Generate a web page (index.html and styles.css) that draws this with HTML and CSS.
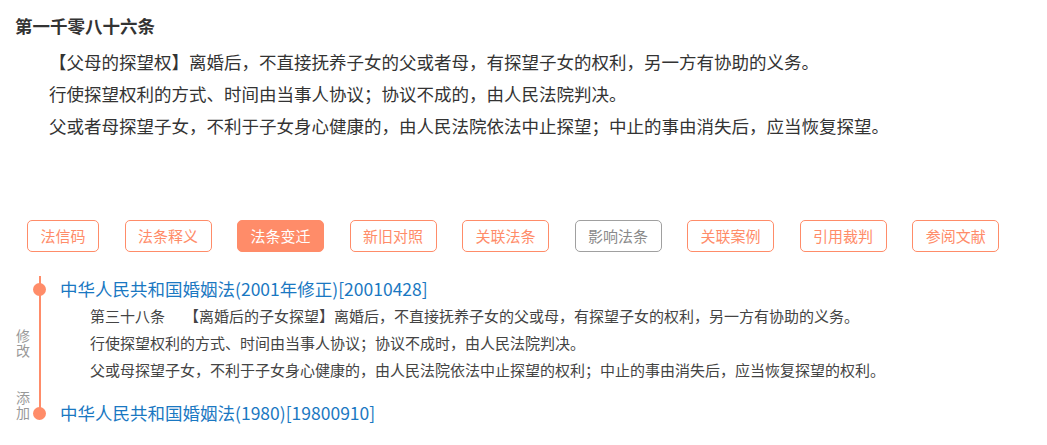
FILE: index.html
```html
<!doctype html>
<html>
  <head>
    <meta charset="UTF-8" />
    <meta name="viewport" content="width=device-width, initial-scale=1">
    <title>第一千零八十六条</title>
    <link rel="stylesheet" href="styles.css">
  </head>
  <body>
    <div class="page">
      <h1 class="article-title">第一千零八十六条</h1>
      <div class="article-body">
        <p>【父母的探望权】离婚后，不直接抚养子女的父或者母，有探望子女的权利，另一方有协助的义务。</p>
        <p>行使探望权利的方式、时间由当事人协议；协议不成的，由人民法院判决。</p>
        <p>父或者母探望子女，不利于子女身心健康的，由人民法院依法中止探望；中止的事由消失后，应当恢复探望。</p>
      </div>

      <div class="tabs">
        <a class="tab">法信码</a>
        <a class="tab">法条释义</a>
        <a class="tab active">法条变迁</a>
        <a class="tab">新旧对照</a>
        <a class="tab">关联法条</a>
        <a class="tab disabled">影响法条</a>
        <a class="tab">关联案例</a>
        <a class="tab">引用裁判</a>
        <a class="tab">参阅文献</a>
      </div>

      <div class="timeline">
        <a class="law-title">中华人民共和国婚姻法(2001年修正)[20010428]</a>

        <span class="change-label">修改</span>
        <div class="law-text">
          <p><span class="art-no">第三十八条</span>【离婚后的子女探望】离婚后，不直接抚养子女的父或母，有探望子女的权利，另一方有协助的义务。</p>
          <p>行使探望权利的方式、时间由当事人协议；协议不成时，由人民法院判决。</p>
          <p>父或母探望子女，不利于子女身心健康的，由人民法院依法中止探望的权利；中止的事由消失后，应当恢复探望的权利。</p>
        </div>

        <span class="change-label">添加</span>
        <a class="law-title last">中华人民共和国婚姻法(1980)[19800910]</a>
      </div>
    </div>
  </body>
</html>
```

FILE: styles.css
```css
body {
  margin: 0;
  font-family: "Noto Sans CJK SC", "Noto Sans", sans-serif;
  color: #333;
  background: #fff;
}
.page {
  padding: 14px 15px 0;
}
.article-title {
  margin: 0;
  font-size: 17.5px;
  line-height: 24px;
  font-weight: bold;
  color: #333;
}
.article-body {
  margin-top: 8px;
  padding-left: 34px;
  font-size: 17.5px;
  line-height: 32px;
}
.article-body p {
  margin: 0;
  white-space: nowrap;
}

/* tab buttons */
.tabs {
  display: flex;
  gap: 25.5px;
  margin: 78px 0 0 12px;
}
.tab {
  display: block;
  height: 30px;
  line-height: 30px;
  padding: 0 12.5px;
  border: 1px solid #ff8c69;
  border-radius: 5px;
  font-size: 15px;
  color: #ff8c69;
  cursor: pointer;
}
.tab.active {
  background: #ff8c69;
  color: #fff;
}
.tab.disabled {
  border-color: #a0a0a0;
  color: #8a8a8a;
}

/* timeline */
.timeline {
  position: relative;
  display: grid;
  grid-template-columns: 45px 1fr;
  margin-top: 24px;
}
.timeline::before {
  content: '';
  position: absolute;
  left: 24px;
  top: 0;
  bottom: 10px;
  width: 1.5px;
  background: #ff8c69;
}
.law-title {
  grid-column: 2;
  position: relative;
  font-size: 17.5px;
  line-height: 26px;
  color: #1a78c2;
  white-space: nowrap;
}
.law-title::before {
  content: '';
  position: absolute;
  left: -27px;
  top: 6.5px;
  width: 13px;
  height: 13px;
  border-radius: 50%;
  background: #ff8c69;
}
.law-title.last {
  margin-top: 17px;
}
.change-label {
  grid-column: 1;
  align-self: center;
  width: 15px;
  margin-left: 1px;
  font-size: 14px;
  line-height: 15px;
  color: #999;
}
.law-text {
  grid-column: 2;
  padding-left: 30px;
  font-size: 15px;
  line-height: 27px;
  color: #444;
}
.law-text p {
  margin: 0;
  white-space: nowrap;
}
.art-no {
  margin-right: 19px;
}
```
